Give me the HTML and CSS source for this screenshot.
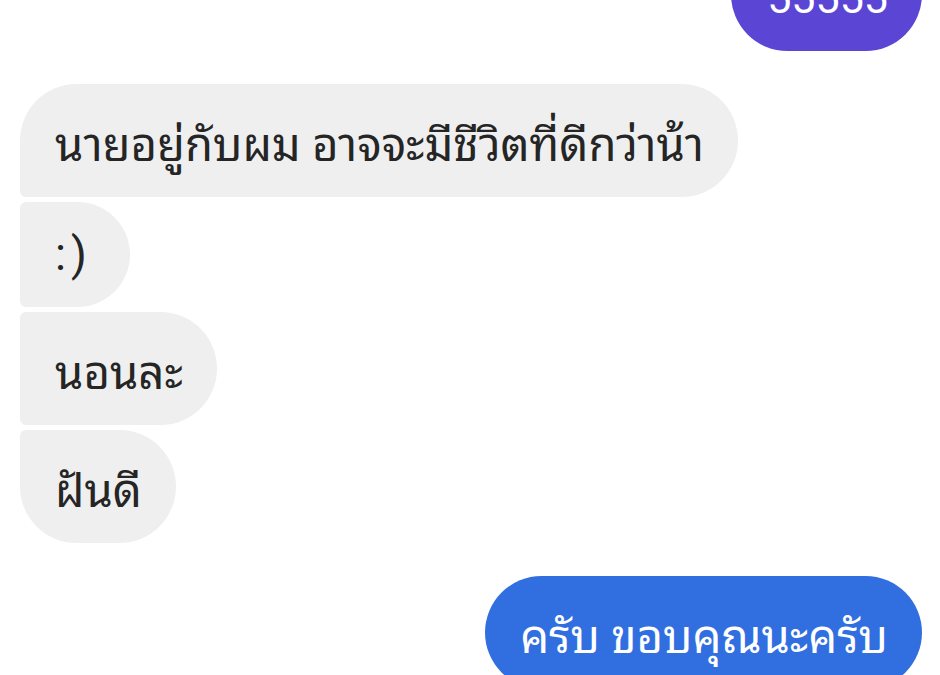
FILE: index.html
```html
<!DOCTYPE html>
<html lang="th">
<head>
<meta charset="utf-8">
<link rel="stylesheet" href="styles.css">
</head>
<body>
<div class="chat">
  <div class="row out">
    <div class="bubble purple">55555</div>
  </div>
  <div class="group">
    <div class="row in"><div class="bubble gray first">นายอยู่กับผม อาจจะมีชีวิตที่ดีกว่าน้า</div></div>
    <div class="row in"><div class="bubble gray mid short">:)</div></div>
    <div class="row in"><div class="bubble gray mid">นอนละ</div></div>
    <div class="row in"><div class="bubble gray last">ฝันดี</div></div>
  </div>
  <div class="row out">
    <div class="bubble blue">ครับ ขอบคุณนะครับ</div>
  </div>
</div>
</body>
</html>
```
FILE: styles.css
```css
html, body {
  margin: 0;
  padding: 0;
  background: #ffffff;
  overflow: hidden;
  width: 940px;
  height: 675px;
}
.chat {
  display: flex;
  flex-direction: column;
  gap: 33px;
  padding: 0 18px 0 20px;
  margin-top: -62px;
  font-family: "Roboto", "Noto Sans Thai Looped", sans-serif;
  font-size: 45.5px;
}
.group {
  display: flex;
  flex-direction: column;
  gap: 5px;
}
.row {
  display: flex;
}
.row.out {
  justify-content: flex-end;
}
.row.in {
  justify-content: flex-start;
}
.bubble {
  box-sizing: border-box;
  height: 113px;
  display: flex;
  align-items: center;
  padding: 0 34px 0 35px;
  border-radius: 57px;
  white-space: nowrap;
}
.gray {
  background: #efefef;
  color: #252525;
}
.gray.first {
  border-radius: 57px 57px 57px 6px;
}
.gray.mid {
  border-radius: 6px 57px 57px 6px;
}
.gray.last {
  border-radius: 6px 57px 57px 57px;
}
.gray.short {
  height: 105px;
  padding-right: 38px;
  letter-spacing: 5px;
  border-radius: 6px 53px 53px 6px;
}
.purple {
  background: #5b45d4;
  color: #ffffff;
  align-items: flex-end;
  font-size: 43px;
  line-height: 1;
  padding: 0 34px 31px 36px;
}
.blue {
  background: #316fe1;
  color: #ffffff;
}
```
